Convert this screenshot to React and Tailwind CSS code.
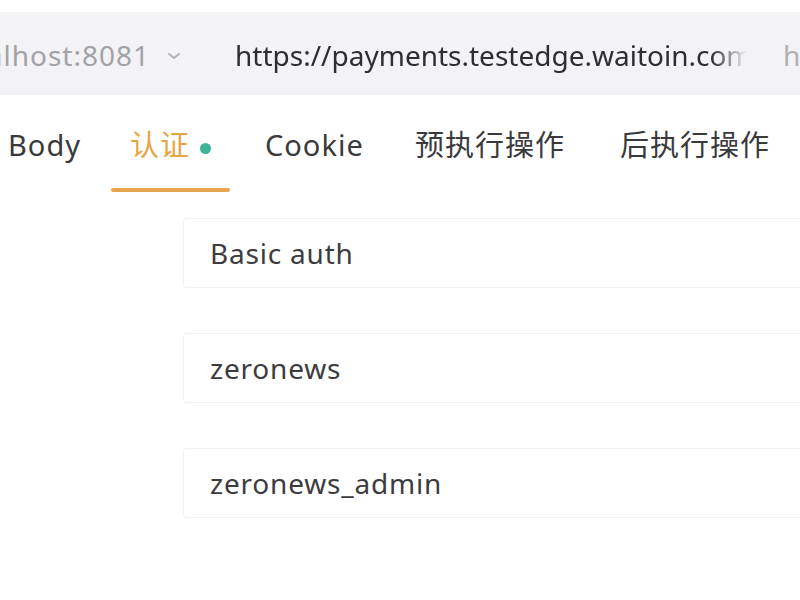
import React from 'react';

const font = { fontFamily: '"Noto Sans", "Noto Sans CJK SC", sans-serif' };

const tabs = [
  { label: 'Body', width: 'w-[103px]' },
  { label: '认证', active: true, dot: true, width: 'w-[119px] mr-[35px]' },
  { label: 'Cookie', width: 'w-[150px]' },
  { label: '预执行操作', width: 'w-[205px]' },
  { label: '后执行操作', width: 'w-[180px]' },
];

const fields = ['Basic auth', 'zeronews', 'zeronews_admin'];

function Chevron() {
  return (
    <svg width="18" height="12" viewBox="0 0 18 12" fill="none" className="mt-[2px] shrink-0">
      <path d="M4 4l5 4 5-4" stroke="#b4b4b8" strokeWidth="2" strokeLinecap="round" strokeLinejoin="round" />
    </svg>
  );
}

export default function App() {
  return (
    <div className="w-[800px] h-[600px] bg-white overflow-hidden" style={font}>
      {/* Address bar */}
      <div className="mt-[12px] h-[83px] pt-[3px] bg-[#f3f3f5] flex items-center whitespace-nowrap overflow-hidden text-[28px]">
        <div className="w-[150px] shrink-0 flex justify-end overflow-hidden">
          <span className="text-[#a2a2a6] tracking-[1px]">localhost:8081</span>
        </div>
        <div className="w-[85px] shrink-0 pl-[15px]">
          <Chevron />
        </div>
        <div className="w-[512px] shrink-0 overflow-hidden text-[#2e2e30] [mask-image:linear-gradient(to_right,black_93%,transparent)]">
          https://payments.testedge.waitoin.com/api
        </div>
        <span className="ml-[36px] text-[#b0b0b4]">h</span>
      </div>

      {/* Tabs */}
      <div className="h-[98px] flex pl-[8px] whitespace-nowrap text-[29px] tracking-[1px] text-[#3a3a3c]">
        {tabs.map((t) => (
          <div
            key={t.label}
            className={
              (t.active ? 'relative pl-[19px] ' : '') +
              'flex items-center h-[98px] pt-[2px] shrink-0 ' +
              t.width
            }
          >
            <span className={t.active ? 'text-[#e8a444]' : ''}>{t.label}</span>
            {t.dot && <span className="ml-[10px] mt-[6px] w-[11px] h-[11px] rounded-full bg-[#3db39a]" />}
            {t.active && (
              <span className="absolute left-0 right-0 bottom-[1px] h-[4px] rounded-full bg-[#e6a64e]" />
            )}
          </div>
        ))}
      </div>

      {/* Auth fields */}
      <div className="mt-[25px] ml-[183px] flex flex-col gap-[45px]">
        {fields.map((f) => (
          <div
            key={f}
            className="h-[70px] flex items-center pl-[26px] border border-r-0 border-[#f1f1f3] rounded-l-[4px] text-[28px] tracking-[0.8px] text-[#3c3c3e]"
          >
            {f}
          </div>
        ))}
      </div>
    </div>
  );
}
